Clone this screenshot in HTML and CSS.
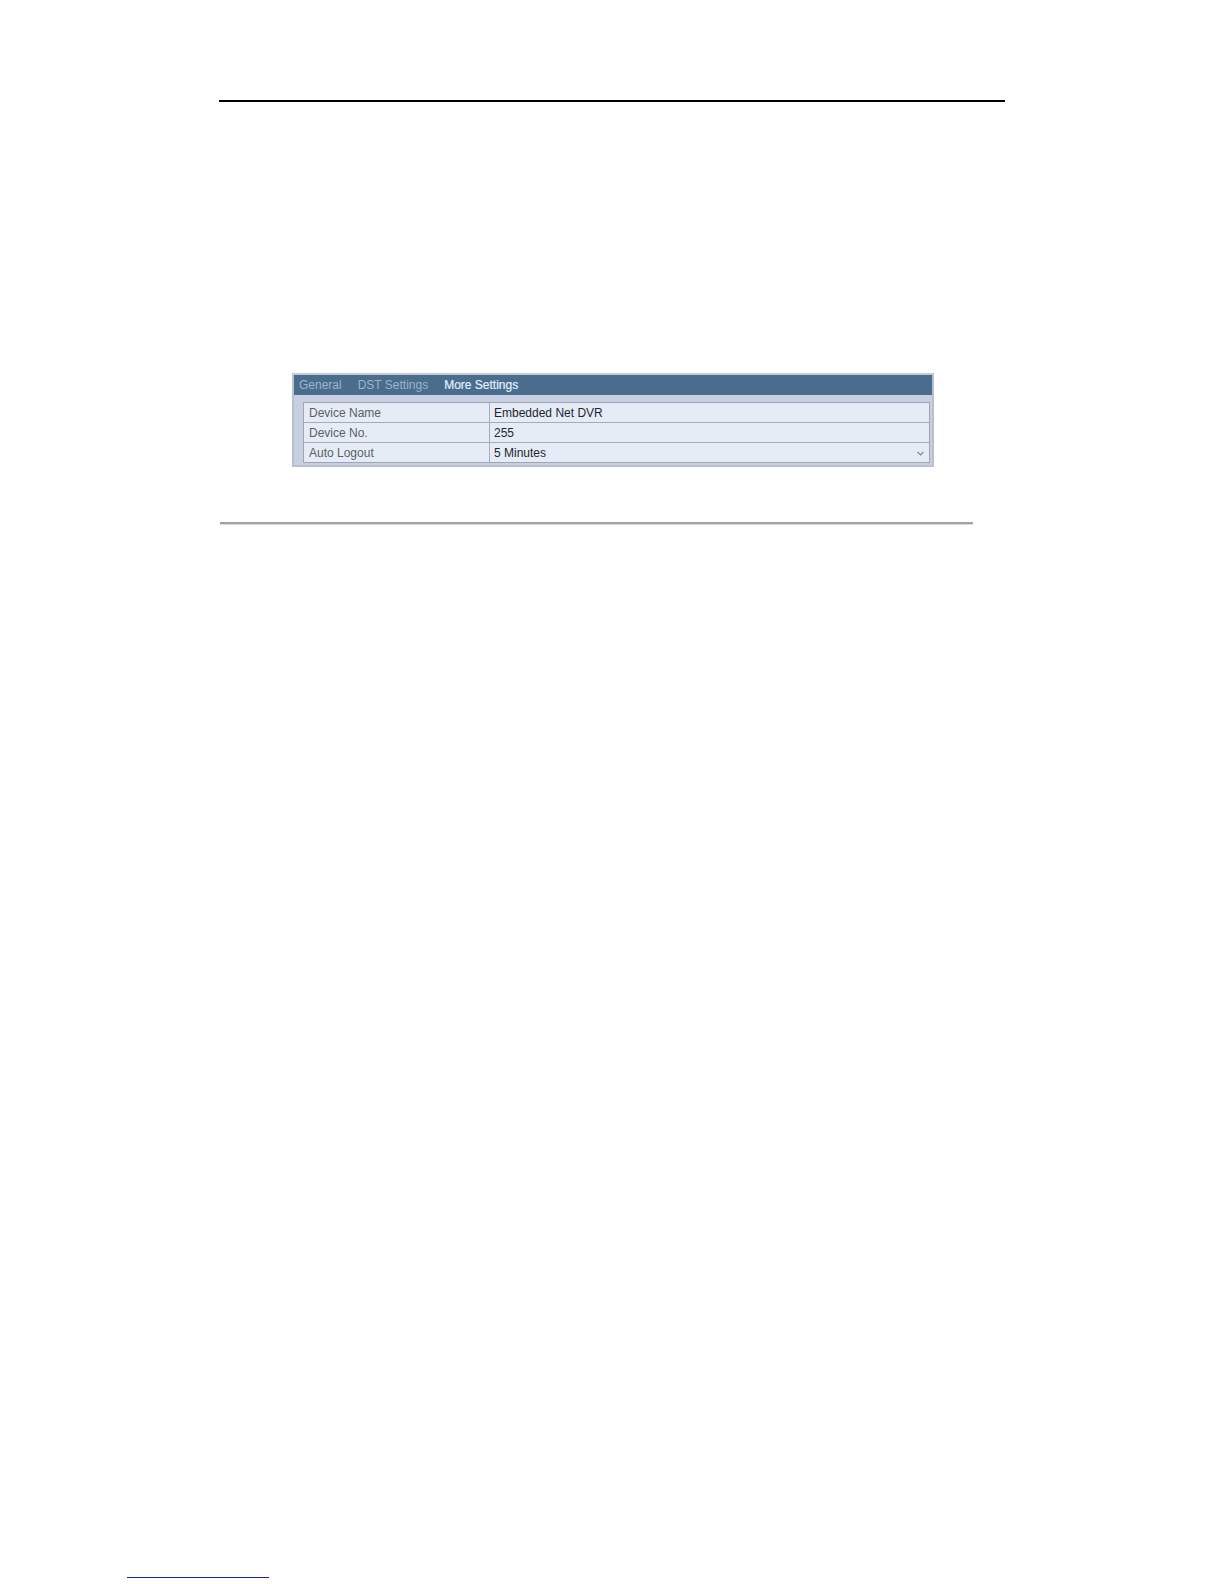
FILE: index.html
```html
<!DOCTYPE html>
<html>
<head>
<meta charset="utf-8">
<link rel="stylesheet" href="styles.css">
</head>
<body>
<div class="page">
  <div class="rule-top"></div>
  <div class="panel">
    <div class="tabs">
      <span class="tab">General</span>
      <span class="tab">DST Settings</span>
      <span class="tab active">More Settings</span>
    </div>
    <div class="table">
      <div class="row">
        <div class="cell label">Device Name</div>
        <div class="cell value">Embedded Net DVR</div>
      </div>
      <div class="row">
        <div class="cell label">Device No.</div>
        <div class="cell value">255</div>
      </div>
      <div class="row">
        <div class="cell label">Auto Logout</div>
        <div class="cell value select">5 Minutes<svg class="chev" width="7" height="5" viewBox="0 0 7 5"><path d="M0.5 0.8 L3.5 3.8 L6.5 0.8" fill="none" stroke="#7a8090" stroke-width="1.2"/></svg></div>
      </div>
    </div>
  </div>
  <div class="rule-gray"></div>
  <div class="link-line"></div>
</div>
</body>
</html>
```
FILE: styles.css
```css
html, body {
  margin: 0;
  padding: 0;
  background: #ffffff;
  font-family: "Liberation Sans", Arial, sans-serif;
}
.page {
  width: 1224px;
  height: 1584px;
  display: flow-root;
  overflow: hidden;
}
.rule-top {
  margin-left: 219px;
  margin-top: 100px;
  width: 786px;
  height: 2px;
  background: #000;
}
.panel {
  margin-left: 292px;
  margin-top: 271px;
  width: 642px;
  height: 94px;
  box-sizing: border-box;
  background: #c8cfe2;
  border: 2px solid #b9c0d2;
  border-top-color: #c4cad8;
}
.tabs {
  height: 20px;
  background: #4a6d8e;
  display: flex;
  align-items: center;
  padding-left: 5px;
  gap: 16px;
  font-size: 12px;
}
.tab {
  color: #9fb3c6;
}
.tab.active {
  color: #e2efff;
  -webkit-text-stroke: 0.2px #e2efff;
}
.table {
  margin: 7px 2px 0 9px;
  border: 1px solid #9ea6b6;
  background: #e6ecf6;
}
.row {
  display: flex;
  height: 19px;
  border-top: 1px solid #a4abbb;
}
.row:first-child {
  border-top: none;
}
.cell {
  display: flex;
  align-items: center;
  font-size: 12px;
}
.label {
  width: 180px;
  padding-left: 5px;
  color: #5c6064;
  border-right: 1px solid #a4abbb;
}
.value {
  flex: 1;
  padding-left: 4px;
  color: #1e2630;
}
.select {
  justify-content: space-between;
  padding-right: 5px;
}
.chev {
  display: block;
  margin-top: 2px;
}
.rule-gray {
  margin-left: 220px;
  margin-top: 55px;
  width: 753px;
  height: 2px;
  background: #a2a2a2;
  border-bottom: 1px solid #dadada;
}
.link-line {
  margin-left: 127px;
  margin-top: 1052px;
  width: 142px;
  height: 1px;
  background: #1a2590;
}
```
